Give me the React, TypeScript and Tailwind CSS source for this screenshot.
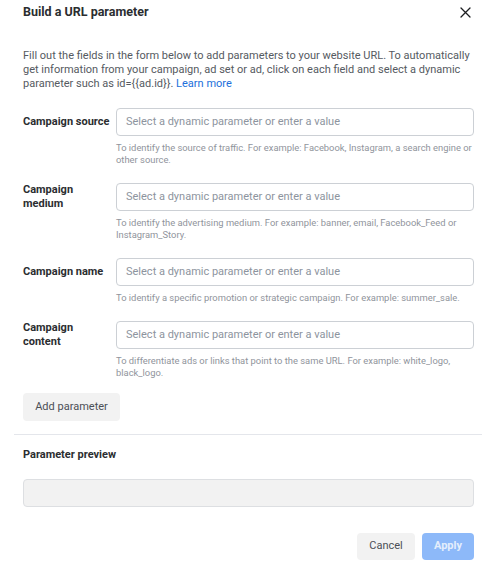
import React from "react";

const rows = [
  {
    label: ["Campaign source"],
    help: "To identify the source of traffic. For example: Facebook, Instagram, a search engine or other source.",
  },
  {
    label: ["Campaign", "medium"],
    help: "To identify the advertising medium. For example: banner, email, Facebook_Feed or Instagram_Story.",
  },
  {
    label: ["Campaign name"],
    help: "To identify a specific promotion or strategic campaign. For example: summer_sale.",
  },
  {
    label: ["Campaign", "content"],
    help: "To differentiate ads or links that point to the same URL. For example: white_logo, black_logo.",
  },
];

const intro =
  "Fill out the fields in the form below to add parameters to your website URL. To automatically get information from your campaign, ad set or ad, click on each field and select a dynamic parameter such as id={{ad.id}}.";

export default function App() {
  return (
    <div className="w-[491px] h-[564px] bg-white font-['Roboto',_'Liberation_Sans',_sans-serif] pl-[23px] pr-[17px] pt-[4px] overflow-hidden">
      <div className="flex items-center justify-between h-[16px]">
        <div className="text-[12.5px] leading-[16px] font-bold text-[#2b2d30]">Build a URL parameter</div>
        <svg width="11" height="11" viewBox="0 0 11 11" className="mr-[3px]">
          <path d="M1 1 L10 10 M10 1 L1 10" stroke="#1c1e21" strokeWidth="1.3" strokeLinecap="round" />
        </svg>
      </div>
      <p className="mt-[29px] text-[11px] leading-[14px] text-[#555a61]">
        {intro}{" "}
        <a className="text-[#216fdb]">Learn more</a>
      </p>
      <div className="mt-[17px] flex flex-col gap-[17px]">
        {rows.map((r, i) => (
          <div key={i}>
            <div className="flex items-center">
              <div className="w-[93px] shrink-0 pr-[4px] text-[11px] leading-[14px] font-bold text-[#2b2d30] whitespace-nowrap">
                {r.label.map((l, j) => (
                  <div key={j}>{l}</div>
                ))}
              </div>
              <div className="flex-1 h-[28px] border border-[#ccd0d5] rounded-[4px] flex items-center px-[9px] text-[11px] text-[#8d949e]">
                Select a dynamic parameter or enter a value
              </div>
            </div>
            <div className="ml-[93px] mt-[6px] text-[9.4px] leading-[12px] text-[#90949c]">{r.help}</div>
          </div>
        ))}
      </div>
      <button className="mt-[14px] h-[28px] w-[97px] rounded-[4px] bg-[#f2f2f2] text-[11px] text-[#4b4f56] flex items-center justify-center">
        Add parameter
      </button>
      <div className="mt-[13px] -ml-[9px] -mr-[8px] h-px bg-[#e4e6eb]" />
      <div className="mt-[13px] text-[11px] leading-[14px] font-bold text-[#2b2d30]">Parameter preview</div>
      <div className="mt-[17px] h-[28px] rounded-[4px] border border-[#dddfe2] bg-[#f2f2f2]" />
      <div className="mt-[26px] flex justify-end gap-[7px]">
        <button className="h-[27px] w-[58px] rounded-[4px] bg-[#f2f2f2] text-[11px] text-[#4b4f56]">Cancel</button>
        <button className="h-[27px] w-[52px] rounded-[4px] bg-[#8db9f9] text-[11px] font-bold text-[#e4eefc]">Apply</button>
      </div>
    </div>
  );
}
